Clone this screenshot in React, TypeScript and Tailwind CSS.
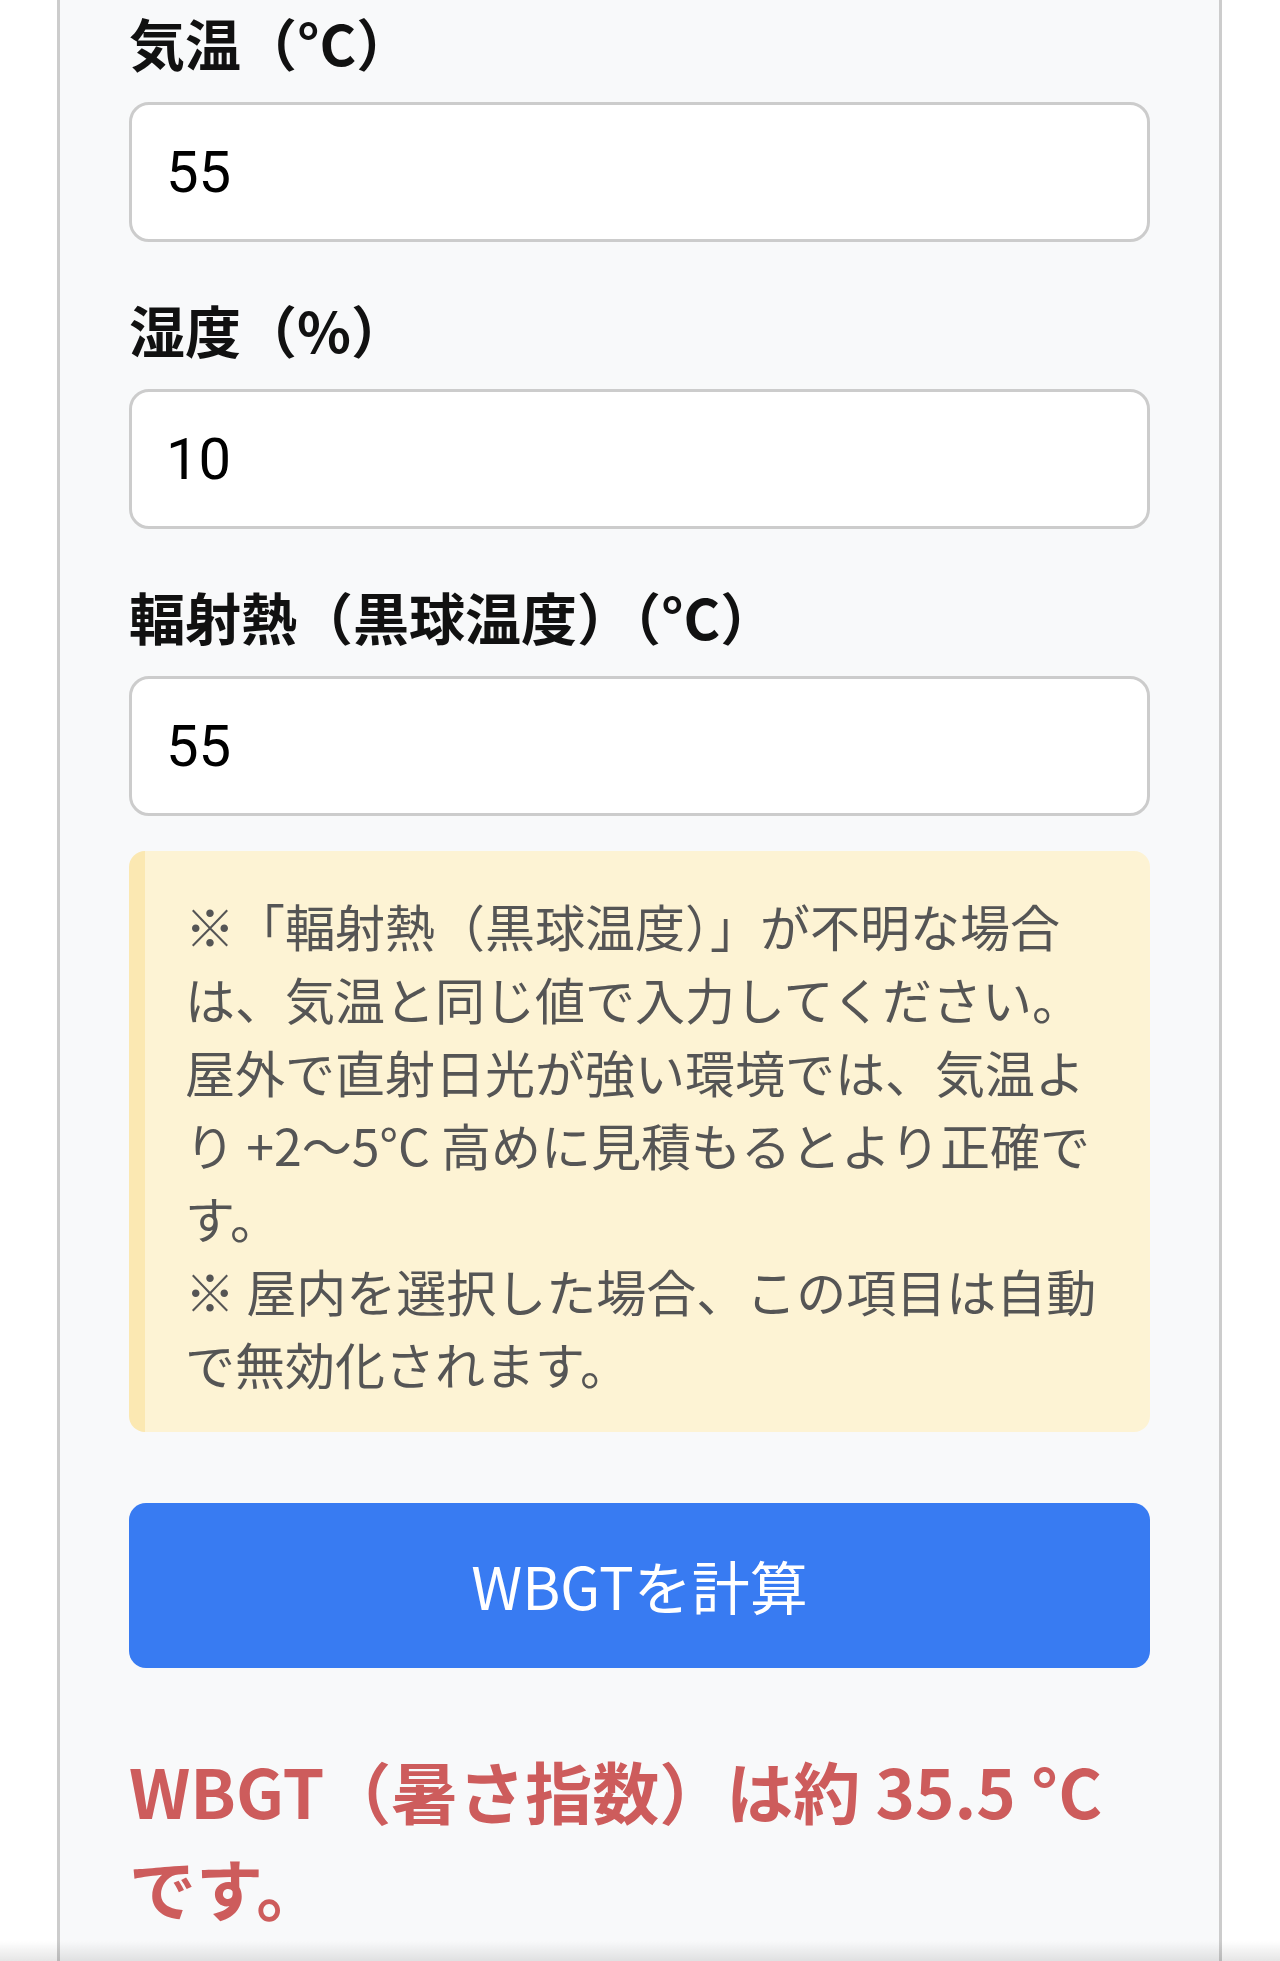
import { useState } from "react";

const JP = "font-['Noto_Sans_CJK_JP','Noto_Sans',sans-serif]";

function Field({ label, value, onChange }: { label: string; value: string; onChange: (v: string) => void }) {
  return (
    <div className="mb-[54px]">
      <label className={`block text-[56px] leading-[66px] font-bold text-[#111] mb-[27px] ${JP}`}>{label}</label>
      <input
        type="text"
        value={value}
        onChange={(e) => onChange(e.target.value)}
        className="block w-full h-[140px] px-[34px] bg-white border-[3px] border-[#cccccc] rounded-[20px] text-[58px] text-black font-['Roboto',sans-serif] focus:outline-none"
      />
    </div>
  );
}

export default function App() {
  const [temp, setTemp] = useState("55");
  const [humidity, setHumidity] = useState("10");
  const [globe, setGlobe] = useState("55");

  return (
    <div className="relative min-h-[1961px] bg-white overflow-hidden">
      <div className="ml-[57px] w-[1165px] min-h-[1961px] border-x-[3px] border-[#cccccc] bg-[#f8f9fa] px-[69px] pt-[9px]">
        <Field label="気温（°C）" value={temp} onChange={setTemp} />
        <Field label="湿度（%）" value={humidity} onChange={setHumidity} />
        <div className="-mb-[19px]">
          <Field label="輻射熱（黒球温度）（°C）" value={globe} onChange={setGlobe} />
        </div>

        {/* Note */}
        <div className={`bg-[#fdf3d4] border-l-[16px] border-[#fbe8b2] rounded-[16px] pl-[40px] pr-[35px] pt-[38px] pb-[32px] text-[50px] leading-[73px] text-[#555555] ${JP}`}>
          ※「輻射熱（黒球温度）」が不明な場合は、気温と同じ値で入力してください。屋外で直射日光が強い環境では、気温より +2〜5°C 高めに見積もるとより正確です。
          <br />
          ※ 屋内を選択した場合、この項目は自動で無効化されます。
        </div>

        <button
          className={`mt-[71px] w-full h-[165px] rounded-[17px] bg-[#387bf2] text-white text-[58px] ${JP}`}
        >
          WBGTを計算
        </button>

        <p className={`mt-[73px] text-[67px] leading-[97px] font-bold text-[#cd5c5c] ${JP}`}>
          WBGT（暑さ指数）は約 35.5 °C です。
        </p>
      </div>
      <div className="absolute bottom-0 left-0 right-0 h-[20px] bg-gradient-to-b from-transparent to-black/10" />
    </div>
  );
}
